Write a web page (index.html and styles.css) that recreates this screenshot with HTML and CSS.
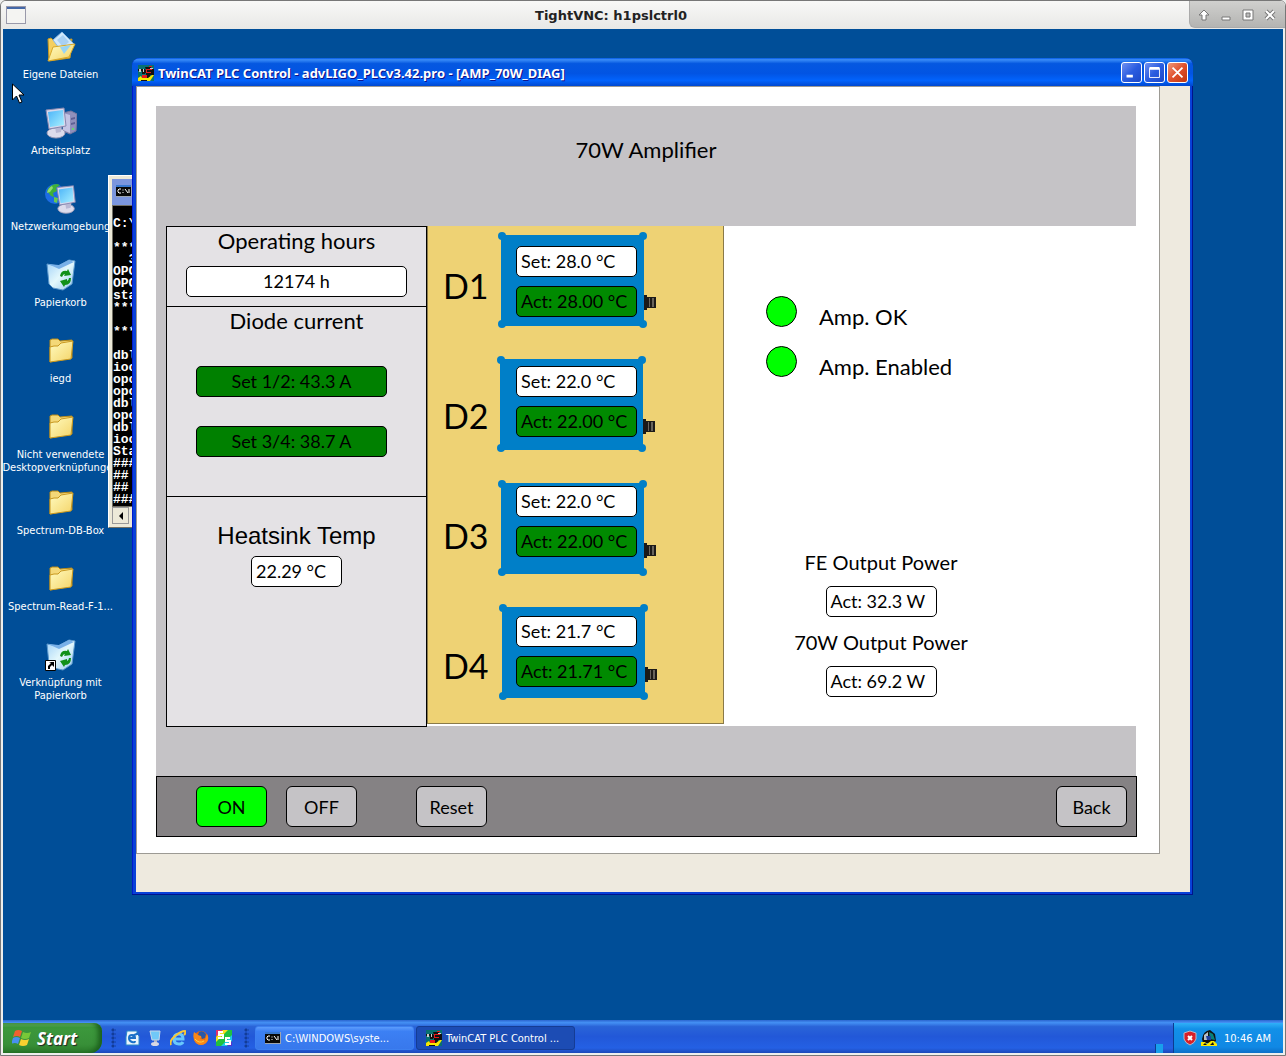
FILE: index.html
```html
<!DOCTYPE html>
<html lang="de">
<head>
	<meta charset="UTF-8">
	<meta name="viewport" content="width=device-width, initial-scale=1.0">
	<title>TightVNC: h1pslctrl0</title>
	<link rel="stylesheet" href="styles.css">
</head>
<body>
	<svg class="defs" aria-hidden="true">
		<defs>
			<linearGradient id="folder-fill" x1="0" y1="0" x2="1" y2="1">
				<stop offset="0" stop-color="#fffbc0"/>
				<stop offset="1" stop-color="#f4d468"/>
			</linearGradient>
			<linearGradient id="screen-fill" x1="0" y1="0" x2="1" y2="1">
				<stop offset="0" stop-color="#4cb4f8"/>
				<stop offset="1" stop-color="#a8f0ff"/>
			</linearGradient>
			<linearGradient id="bin-fill" x1="0" y1="0" x2="1" y2="1">
				<stop offset="0" stop-color="#9fd0f8"/>
				<stop offset="0.5" stop-color="#e4f8fc"/>
				<stop offset="1" stop-color="#8fc4ec"/>
			</linearGradient>
			<symbol id="folder" viewBox="0 0 32 32">
				<path d="M5 5l2-1h6l2 2 12-1v18L5 27z" fill="#f4d878" stroke="#b88a18"/>
				<path d="M5 12l4-1 4 0 3-3 12-2-2 18L5 27z" fill="url(#folder-fill)" stroke="#c89820"/>
			</symbol>
			<symbol id="documents" viewBox="0 0 32 32">
				<path d="M3 8l3-1 3 3 18-2-2 19L4 30z" fill="#f4cf60" stroke="#c89820"/>
				<path d="M8 9l9-8 12 12-12 8z" fill="#d0e8fc" stroke="#88b8e4"/>
				<path d="M12 9l6-5 6 7-6 5z" fill="#a8d0f4"/>
				<path d="M3 30l5-14 22-3-6 13z" fill="url(#folder-fill)" stroke="#d8a828"/>
				<path d="M15 16l11-2-7 9z" fill="#98d4f4"/>
			</symbol>
			<symbol id="monitor" viewBox="0 0 24 32">
				<ellipse cx="11" cy="26" rx="9" ry="5" fill="#dcdcec" stroke="#9c9cb8"/>
				<path d="M10 19l7-1-1 7-5 1z" fill="#b8b8d4"/>
				<path d="M1 3l18-2 2 18-17 3z" fill="#d8d8ec" stroke="#8888b0"/>
				<path d="M3 5l15-2 1 15-14 2z" fill="url(#screen-fill)"/>
			</symbol>
			<symbol id="computer" viewBox="0 0 32 32">
				<path d="M18 6l8-2 6 3-1 17-6 3-7-3z" fill="#9090bc" stroke="#7878a0"/>
				<path d="M18 6l7 2v18l-7-3z" fill="#c4c4e4"/>
				<path d="M26 11l4-1v2l-4 1zm0 5l4-1v2l-4 1z" fill="#606094"/>
				<circle cx="28" cy="22" r="1" fill="#58f058"/>
				<use href="#monitor" width="24" height="32"/>
			</symbol>
			<symbol id="network" viewBox="0 0 32 32">
				<circle cx="10" cy="11" r="10" fill="#1c6ce4"/>
				<path d="M2 8q3-7 10-7l3 1-4 3 1 3-4 2 1 4-3-1z" fill="#40b038"/>
				<path d="M9 14l4 1-1 5-3-1z" fill="#68c850"/>
				<path d="M2 10q1-5 5-7l1 2-3 4z" fill="#90dc70"/>
				<use href="#monitor" x="11" y="1" width="22" height="31"/>
			</symbol>
			<symbol id="bin" viewBox="0 0 32 32">
				<path d="M2 5l11 2 11-6 6 1-3 23-9 6-10-2-4-4z" fill="url(#bin-fill)" stroke="#5c98cc"/>
				<path d="M3 5l11 5 15-7-5-2-10 5z" fill="#78b0e8"/>
				<path d="M15 17q1-6 7-5l1-2 3 6-7 1 1-2q-2 0-3 3zM26 19q0 7-6 7l-1 2-4-6 7-2v2q2-1 2-3z" fill="#109018"/>
			</symbol>
			<symbol id="twincat" viewBox="0 0 16 16">
				<path d="M0 0h16v16H0z" fill="#087070"/>
				<path d="M0 4h7v5H4V6H0zM7 2h6v2h3v6h-4v3H5v-3h3V8H6V5h2z" fill="#111"/>
				<path d="M8 4h6v1H9v2h4v1H8zM4 10h5v3H4zM11 1h3v1h-3z" fill="#e81818"/>
				<path d="M1 4h2v3H1zM5 4h1v3H5zM12 3h3v1h-3z" fill="#ccc"/>
				<path d="M0 16v-3l3-2 1 2h6l4-3h2l-4 6z" fill="#f8e800"/>
				<path d="M3 15h6v1H3z" fill="#111"/>
			</symbol>
			<symbol id="cmd" viewBox="0 0 16 12">
				<path d="M0 0h16v12H0z" fill="#9ca4b0"/>
				<path d="M0 0h15v11H0z" fill="#080808"/>
				<path d="M0 0h15v2H0z" fill="#3878d0"/>
				<path d="M5 4H3L2 5v2l1 1h2M7 4.500v1M7 7v1M9 4l3 4M13 4v4" stroke="#fff" fill="none"/>
			</symbol>
			<symbol id="module" viewBox="0 0 160 100" overflow="visible">
				<path d="M1 4h143v91H1z" fill="#007fc8"/>
				<circle cx="2" cy="5" r="4" fill="#007fc8"/>
				<circle cx="143" cy="5" r="4" fill="#007fc8"/>
				<circle cx="2" cy="93" r="4" fill="#007fc8"/>
				<circle cx="143" cy="93" r="4" fill="#007fc8"/>
				<path d="M144 64h3v15h-3zM147 66h9v11h-9z" fill="#1c1a18"/>
				<path d="M149 67h1v9h-1zM152 67h2v9h-2z" fill="#69645c"/>
			</symbol>
		</defs>
	</svg>

	<header class="vnc-bar">
		<svg class="vnc-icon" viewBox="0 0 20 18" aria-hidden="true">
			<rect x="0.500" y="0.500" width="19" height="17" fill="#f4f4f2" stroke="#99a"/>
			<path d="M1 1h18v2H1z" fill="#4468a8"/>
		</svg>
		<h1>TightVNC: h1pslctrl0</h1>
		<div class="vnc-buttons">
			<button type="button" aria-label="Shade"><svg viewBox="0 0 12 12"><path d="M6 1L1 6h3v5h4V6h3z" fill="#fff" stroke="#777"/></svg></button>
			<button type="button" aria-label="Minimize"><svg viewBox="0 0 12 12"><path d="M2 8h8v3H2z" fill="#fff" stroke="#777"/></svg></button>
			<button type="button" aria-label="Maximize"><svg viewBox="0 0 12 12"><path d="M1 1h10v10H1z" fill="#fff" stroke="#777"/><path d="M4 4h4v4H4z" fill="#bbb" stroke="#777"/></svg></button>
			<button type="button" aria-label="Close"><svg viewBox="0 0 12 12"><path d="M2 2l8 8M10 2l-8 8" stroke="#777" stroke-width="4"/><path d="M2 2l8 8M10 2l-8 8" stroke="#fff" stroke-width="2"/></svg></button>
		</div>
	</header>

	<main class="desktop">
		<ul class="shortcuts">
			<li><svg><use href="#documents"/></svg><span>Eigene Dateien</span></li>
			<li><svg><use href="#computer"/></svg><span>Arbeitsplatz</span></li>
			<li><svg><use href="#network"/></svg><span>Netzwerkumgebung</span></li>
			<li><svg><use href="#bin"/></svg><span>Papierkorb</span></li>
			<li><svg><use href="#folder"/></svg><span>iegd</span></li>
			<li><svg><use href="#folder"/></svg><span>Nicht verwendete<br>Desktopverknüpfungen</span></li>
			<li><svg><use href="#folder"/></svg><span>Spectrum-DB-Box</span></li>
			<li><svg><use href="#folder"/></svg><span>Spectrum-Read-F-1...</span></li>
			<li>
				<svg viewBox="0 0 32 32">
					<use href="#bin"/>
					<path d="M0.500 21.500h10v10h-10z" fill="#fff" stroke="#000"/>
					<path d="M3 30v-3l3-3-2-1h5v5l-2-2-2 2v2z" fill="#000"/>
				</svg>
				<span>Verknüpfung mit<br>Papierkorb</span>
			</li>
		</ul>

		<section class="console">
			<div class="console-title"><svg><use href="#cmd"/></svg></div>
			<pre>

C:\

***
  3
OPC
OPC
sta
***

***

dbl
ioc
opc
opc
dbl
opc
dbl
ioc
Sta
###
##
##
###</pre>
			<div class="console-scroll"><button type="button" aria-label="Scroll left"><svg viewBox="0 0 8 8"><path d="M6 0v8L2 4z"/></svg></button></div>
		</section>

		<section class="window">
			<div class="window-title">
				<svg class="app-icon"><use href="#twincat"/></svg>
				<h2>TwinCAT PLC Control - advLIGO_PLCv3.42.pro - [AMP_70W_DIAG]</h2>
				<button type="button" aria-label="Minimize"><svg viewBox="0 0 21 21"><path d="M5 13h7v3H5z" fill="#fff"/></svg></button>
				<button type="button" aria-label="Maximize"><svg viewBox="0 0 21 21"><path d="M5 6h11v10H5z" fill="none" stroke="#fff"/><path d="M5 6h11" stroke="#fff" stroke-width="3"/></svg></button>
				<button type="button" class="close" aria-label="Close"><svg viewBox="0 0 21 21"><path d="M5 5l11 11M16 5L5 16" stroke="#fff" stroke-width="2"/></svg></button>
			</div>
			<div class="window-body">
				<div class="page">
					<h3 class="banner">70W Amplifier</h3>
					<div class="middle">
						<div class="readings">
							<section class="hours">
								<h4>Operating hours</h4>
								<output class="field">12174 h</output>
							</section>
							<section class="current">
								<h4>Diode current</h4>
								<output class="field good">Set 1/2: 43.3 A</output>
								<output class="field good">Set 3/4: 38.7 A</output>
							</section>
							<section class="heatsink">
								<h4>Heatsink Temp</h4>
								<output class="field">22.29 °C</output>
							</section>
						</div>
						<div class="diodes">
							<svg class="drawing" aria-hidden="true">
								<use href="#module" x="73" y="5" width="160" height="100"/>
								<use href="#module" x="72" y="129" width="160" height="100"/>
								<use href="#module" x="73" y="253" width="160" height="100"/>
								<use href="#module" x="74" y="377" width="160" height="100"/>
							</svg>
							<div class="names">
								<span>D1</span>
								<span>D2</span>
								<span>D3</span>
								<span>D4</span>
							</div>
							<div class="temps">
								<div class="pair"><output class="field">Set: 28.0 °C</output><output class="field act">Act: 28.00 °C</output></div>
								<div class="pair"><output class="field">Set: 22.0 °C</output><output class="field act">Act: 22.00 °C</output></div>
								<div class="pair"><output class="field">Set: 22.0 °C</output><output class="field act">Act: 22.00 °C</output></div>
								<div class="pair"><output class="field">Set: 21.7 °C</output><output class="field act">Act: 21.71 °C</output></div>
							</div>
						</div>
						<div class="status">
							<ul class="lamps">
								<li><i class="lamp"></i>Amp. OK</li>
								<li><i class="lamp"></i>Amp. Enabled</li>
							</ul>
							<div class="power">
								<h4>FE Output Power</h4>
								<output class="field">Act: 32.3 W</output>
								<h4>70W Output Power</h4>
								<output class="field">Act: 69.2 W</output>
							</div>
						</div>
					</div>
					<div class="strip"></div>
					<div class="controls">
						<button type="button" class="on">ON</button>
						<button type="button">OFF</button>
						<button type="button" class="reset">Reset</button>
						<button type="button" class="back">Back</button>
					</div>
				</div>
			</div>
		</section>

		<svg class="cursor" viewBox="0 0 12 21" aria-hidden="true">
			<path d="M0.500 1v16l4-4 3 7 2.500-1-3-7h5z" fill="#fff" stroke="#000"/>
		</svg>
	</main>

	<footer class="taskbar">
		<button type="button" class="start">
			<svg viewBox="0 0 20 18" aria-hidden="true">
				<path d="M3 2q3-2 7 0L8 8Q5 6 1 8z" fill="#f06030"/>
				<path d="M11 3q4 2 8 0l-2 6q-4 2-8 0z" fill="#78c838"/>
				<path d="M1 9q3-2 7 0l-2 6q-3-2-7 0z" fill="#4890f0"/>
				<path d="M9 10q4 2 8 0l-2 6q-4 2-8 0z" fill="#f8d030"/>
			</svg>
			Start
		</button>
		<i class="grip"></i>
		<nav class="quick">
			<a href="#" aria-label="Show documents"><svg viewBox="0 0 16 16"><path d="M3 1h10v3l2 2v9H2V7z" fill="#e8f4fc" stroke="#2888c8"/><path d="M5 8h6q0-3-3-3t-3 3 3 4 3-1M8 6l7-3" stroke="#1870c8" stroke-width="2" fill="none"/></svg></a>
			<a href="#" aria-label="Computer"><svg viewBox="0 0 16 16"><path d="M3 1h10l-1 9H5z" fill="#70c8f8" stroke="#c8d8e8"/><path d="M7 10h3v3H7z" fill="#b0b8cc"/><ellipse cx="8" cy="14" rx="4" ry="2" fill="#d8d8e4"/></svg></a>
			<a href="#" aria-label="Internet Explorer"><svg viewBox="0 0 16 16"><path d="M4 9h9q0-5-4-5-5 0-5 5t5 5q3 0 4-2" fill="none" stroke="#68c8fc" stroke-width="3"/><path d="M1 15Q-1 11 5 6t10-5q1 2-1 4" fill="none" stroke="#f8c838" stroke-width="2"/></svg></a>
			<a href="#" aria-label="Firefox"><svg viewBox="0 0 16 16"><circle cx="8" cy="8" r="7" fill="#e86810"/><path d="M1 2l4 3 4 1-2 3 5 1 2-6q3 5-1 9-5 4-10 0Q-1 9 1 2z" fill="#f88818"/><path d="M6 2q4-2 7 2l-1 4-3 1-1-3-3-1z" fill="#2858a8"/><path d="M2 9q4 5 9 2" stroke="#ffd040" fill="none"/></svg></a>
			<a href="#" aria-label="Spectrum"><svg viewBox="0 0 16 16"><path d="M0 0h16v16H0z" fill="#20c040"/><path d="M0 0h7L0 7z" fill="#e03070"/><path d="M7 0h5L0 12V7z" fill="#f8e020"/><path d="M16 5v6l-5 5H5z" fill="#20c8e8"/><path d="M16 11v5h-5z" fill="#5830d0"/><path d="M7 2H3v3h4v3H2M14 8h-4v3h4v3H9" stroke="#fff" stroke-width="2" fill="none"/></svg></a>
		</nav>
		<i class="grip"></i>
		<button type="button" class="task"><svg class="cmd"><use href="#cmd"/></svg>C:\WINDOWS\syste...</button>
		<button type="button" class="task active"><svg><use href="#twincat"/></svg>TwinCAT PLC Control ...</button>
		<i class="nub"></i>
		<div class="tray">
			<svg viewBox="0 0 16 16" aria-hidden="true"><path d="M8 1l6 2v6q-1 4-6 6-5-2-6-6V3z" fill="#d82028" stroke="#b8b8c8"/><path d="M6 6l4 4M10 6l-4 4" stroke="#fff" stroke-width="2"/></svg>
			<svg viewBox="0 0 16 16" aria-hidden="true"><path d="M1 9Q2 1 9 0l5 4 1 7-3 2H2z" fill="#111"/><path d="M3 5l4-3v8H3z" fill="#b8c0c8"/><path d="M8 2l4 2 2 6-5-1z" fill="#088078"/><path d="M5 6h5v4H6z" fill="#2040a0"/><path d="M0 12h4l2 2 4-3h3l3 3v2H0z" fill="#f8e800"/><path d="M2 15l2-2 2 2zM9 15l3-3 1 3z" fill="#111"/></svg>
			<time>10:46 AM</time>
		</div>
	</footer>
</body>
</html>
```
FILE: styles.css
```css
* {
	box-sizing: border-box;
}
body {
	margin: 0;
	height: 100vh;
	display: flex;
	flex-direction: column;
	border: 1px solid #777;
	border-radius: 6px 6px 0 0;
	padding: 0 2px 2px;
	background-color: #eeeeec;
	font-family: "DejaVu Sans Condensed", "DejaVu Sans", sans-serif;
	font-size: 11px;
	color: #000;
	overflow: hidden;
}
h1, h2, h3, h4, ul, pre {
	margin: 0;
	padding: 0;
	font-weight: normal;
}
ul {
	list-style: none;
}
button {
	padding: 0;
	font: inherit;
	cursor: pointer;
}
svg {
	display: block;
	flex: none;
}
.defs {
	position: absolute;
	width: 0;
	height: 0;
}

/* viewer title bar */
.vnc-bar {
	flex: none;
	display: grid;
	grid-template-columns: 32px 1fr 96px;
	align-items: center;
	height: 28px;
	margin: 0 -2px;
	background: linear-gradient(#f8f8f7, #e8e8e6);
}
.vnc-icon {
	width: 20px;
	height: 18px;
	margin-left: 5px;
}
.vnc-bar h1 {
	font: bold 13px "DejaVu Sans", sans-serif;
	color: #222;
	text-align: center;
}
.vnc-buttons {
	display: flex;
	align-self: start;
	justify-content: center;
	gap: 10px;
	padding: 8px 2px 6px 0;
	background: linear-gradient(#d0d0ce, #b4b4b2);
	border: 1px solid #aaa;
	border-width: 0 0 1px 1px;
	border-radius: 0 0 0 6px;
}
.vnc-buttons button {
	width: 12px;
	height: 12px;
	background: none;
	border: 0;
}

/* desktop */
.desktop {
	position: relative;
	flex: 1;
	min-height: 0;
	overflow: hidden;
	background-color: #004e98;
}
.shortcuts {
	width: 115px;
	padding-top: 2px;
}
.shortcuts li {
	display: flex;
	flex-direction: column;
	align-items: center;
	height: 76px;
	gap: 5px;
	color: #fff;
	line-height: 13px;
	text-align: center;
	white-space: nowrap;
}
.shortcuts svg {
	width: 32px;
	height: 32px;
}
.cursor {
	position: absolute;
	left: 9px;
	top: 54px;
	width: 12px;
	height: 21px;
}

/* command prompt behind the main window */
.console {
	position: absolute;
	left: 105px;
	top: 146px;
	width: 50px;
	padding: 3px;
	background-color: #ece9d8;
	border: 1px solid #fff;
	border-bottom-color: #716f64;
}
.console-title {
	height: 26px;
	padding: 6px 4px;
	background-color: #7b96de;
}
.console-title svg {
	width: 16px;
	height: 12px;
}
.console pre {
	border: 1px solid #716f64;
	background-color: #000;
	color: #fff;
	font: bold 13px/12px "Liberation Mono", monospace;
}
.console-scroll button {
	display: block;
	width: 17px;
	height: 17px;
	padding: 4px;
	background-color: #ece9d8;
	border: 1px solid #999;
}
.console-scroll svg {
	width: 8px;
	height: 8px;
}

/* main window */
.window {
	position: absolute;
	left: 129px;
	top: 29px;
	right: 90px;
	padding: 0 3px 3px 4px;
	background-color: #0841d8;
	border-radius: 8px 8px 0 0;
	box-shadow: inset -1px -1px #00138c, inset 1px 0 #0019cf;
}
.window-title {
	display: flex;
	align-items: center;
	gap: 2px;
	height: 28px;
	margin: 0 -3px 0 -4px;
	padding: 1px 5px 0 6px;
	border-radius: 8px 8px 0 0;
	background: linear-gradient(#0058e6, #3a8cf8 6%, #0558e0 20%, #0254e3 55%, #0263fc 80%, #0048d0);
}
.app-icon {
	width: 16px;
	height: 16px;
}
.window-title h2 {
	flex: 1;
	margin-left: 2px;
	font-family: "Noto Sans", sans-serif;
	font-size: 13px;
	font-weight: bold;
	color: #fff;
	text-shadow: 1px 1px #0f1089;
	white-space: nowrap;
}
.window-title button {
	width: 21px;
	height: 21px;
	border: 1px solid #fff;
	border-radius: 3px;
	background: linear-gradient(135deg, #7090f0, #2a5ce0 50%, #1c48c8);
}
.window-title .close {
	background: linear-gradient(135deg, #f09878, #e0502c 50%, #c03810);
}
.window-body {
	padding: 0 30px 38px 0;
	background-color: #eeeadf;
}
.page {
	padding: 19px 23px 16px 19px;
	background-color: #fff;
	border: 1px solid #9c9a94;
	font-family: Lato, sans-serif;
	font-size: 18px;
}
.banner {
	padding: 29px 0 61px;
	background-color: #c5c3c6;
	font-size: 22px;
	line-height: 30px;
	text-align: center;
}
.page h4 {
	font-size: 22px;
	line-height: 28px;
	padding-bottom: 2px;
}
.middle {
	display: grid;
	grid-template-columns: 261px 297px 1fr;
	padding-left: 10px;
	background: linear-gradient(#c5c3c6, #c5c3c6) left / 10px 100% no-repeat;
}
.readings {
	display: flex;
	flex-direction: column;
	height: 501px;
	margin-bottom: -1px;
	background-color: #e4e2e5;
	border: 1px solid #000;
	z-index: 1;
}
.readings section {
	display: flex;
	flex-direction: column;
	align-items: center;
}
.readings section + section {
	border-top: 1px solid #000;
}
.field {
	display: block;
	height: 31px;
	padding: 0 4px;
	background-color: #fff;
	border: 1px solid #000;
	border-radius: 5px;
	line-height: 29px;
	white-space: nowrap;
}
.hours .field {
	width: 221px;
	margin: 9px 0;
	text-align: center;
}
.current {
	gap: 29px;
	padding-bottom: 39px;
}
.current .field {
	width: 191px;
	margin-right: 10px;
	text-align: center;
}
.current .good {
	background-color: #008000;
}
.heatsink {
	padding-top: 25px;
}
.heatsink h4 {
	font-family: "Liberation Sans", sans-serif;
	font-size: 24px;
}
.heatsink .field {
	width: 91px;
	margin-top: 4px;
}
.diodes {
	position: relative;
	display: flex;
	height: 498px;
	background-color: #eed274;
	border: solid #8a7a48;
	border-width: 0 1px 1px;
}
.drawing {
	position: absolute;
	left: -1px;
	top: 0;
	width: 100%;
	height: 100%;
}
.names, .temps {
	position: relative;
	display: flex;
	flex-direction: column;
}
.names {
	width: 88px;
	padding: 30px 0 0 15px;
	gap: 60px;
	font-size: 34px;
	line-height: 60px;
}
.names span:first-child {
	margin-bottom: 10px;
}
.names span:last-child {
	margin-top: 10px;
}
.temps {
	width: 121px;
	padding-top: 20px;
	gap: 49px;
}
.pair {
	display: flex;
	flex-direction: column;
	gap: 9px;
}
.pair:last-child {
	margin-top: 10px;
}
.field.act {
	background-color: #008a00;
}
.status {
	padding: 70px 0 0 42px;
}
.lamps {
	font-size: 22px;
}
.lamps li {
	display: flex;
	gap: 22px;
	height: 50px;
	line-height: 42px;
}
.lamp {
	width: 31px;
	height: 31px;
	border: 1px solid #000;
	border-radius: 50%;
	background-color: #0f0;
}
.power {
	display: flex;
	flex-direction: column;
	align-items: center;
	width: 230px;
	padding-top: 152px;
}
.power h4 {
	font-size: 20px;
}
.power .field {
	width: 111px;
	margin: 8px 0 11px;
}
.strip {
	height: 50px;
	background-color: #c5c3c6;
}
.controls {
	display: flex;
	gap: 19px;
	margin-right: -1px;
	padding: 9px 9px 9px 39px;
	background-color: #858284;
	border: 1px solid #000;
}
.controls button {
	width: 71px;
	height: 41px;
	background-color: #c5c3c6;
	border: 1px solid #000;
	border-radius: 6px;
	color: #000;
}
.controls .on {
	background-color: #0f0;
}
.controls .reset {
	margin-left: 40px;
}
.controls .back {
	margin-left: auto;
}

/* taskbar */
.taskbar {
	flex: none;
	display: flex;
	align-items: flex-end;
	height: 33px;
	background: linear-gradient(#2c66d0, #4490f4 8%, #2a64d8 20%, #2258d8 50%, #2460e4 85%, #1c48b8);
	color: #fff;
}
.start {
	display: flex;
	align-items: center;
	gap: 5px;
	width: 99px;
	height: 30px;
	padding-left: 9px;
	border: 0;
	border-radius: 0 8px 12px 0;
	background: linear-gradient(#6cb868, #3c983c 15%, #389038 70%, #2c7c2c);
	box-shadow: inset -4px 0 5px #1c601c;
	color: #fff;
	font: italic bold 17px "Noto Sans", sans-serif;
	text-shadow: 1px 1px 1px #222;
}
.start svg {
	width: 20px;
	height: 18px;
}
.grip {
	width: 5px;
	height: 20px;
	margin: 0 8px 5px 9px;
	background: radial-gradient(circle, #123c98 1px, transparent 2px) 0 0 / 4px 4px;
}
.quick {
	display: flex;
	gap: 7px;
	padding-bottom: 7px;
}
.quick svg {
	width: 16px;
	height: 16px;
}
.quick + .grip {
	margin-left: 12px;
	margin-right: 6px;
}
.task {
	display: flex;
	align-items: center;
	gap: 4px;
	width: 159px;
	height: 24px;
	margin: 0 2px 3px 0;
	padding-left: 9px;
	border: 1px solid #3c80f0;
	border-radius: 3px;
	background: linear-gradient(#5c9cfc, #3c80f4 20%, #3878ec);
	color: #fff;
	white-space: nowrap;
}
.task svg {
	width: 16px;
	height: 16px;
}
.task .cmd {
	height: 12px;
}
.task.active {
	background: #1c4cb4;
	border-color: #153c94;
}
.nub {
	width: 8px;
	height: 9px;
	margin: 0 10px 0 auto;
	background-color: #18a0ec;
	border-left: 1px solid #0c3c90;
}
.tray {
	display: flex;
	align-items: center;
	gap: 3px;
	width: 110px;
	height: 30px;
	padding-left: 8px;
	background: linear-gradient(#30b0f8, #1290e8 20%, #1088e4 80%, #0c70c8);
	border-left: 1px solid #0c3c90;
}
.tray svg {
	width: 16px;
	height: 16px;
}
.tray time {
	margin-left: 4px;
}
```
